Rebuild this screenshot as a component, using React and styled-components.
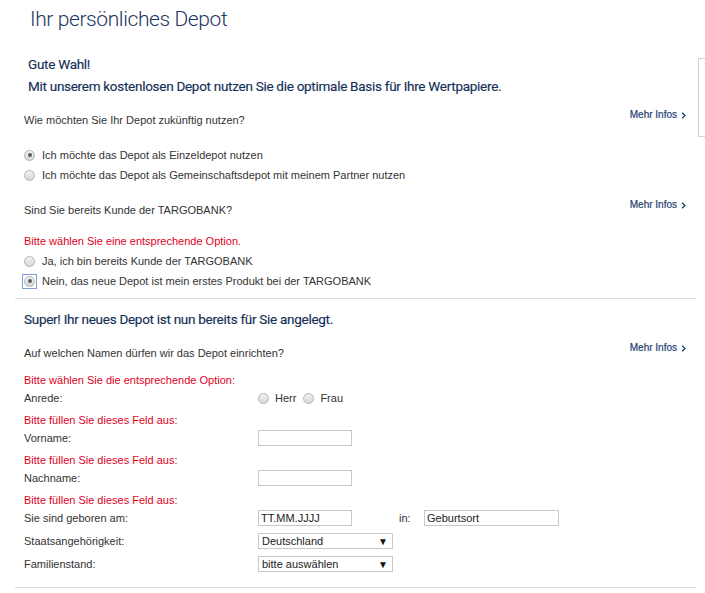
import React from 'react'
import styled, { createGlobalStyle, css } from 'styled-components'

const GlobalStyle = createGlobalStyle`
  body {
    margin: 0;
    background: #fff;
    overflow: hidden;
    font-family: "Liberation Sans", Arial, sans-serif;
    font-size: 11px;
    color: #333;
  }
`

const Page = styled.div`
  display: flex;
  align-items: flex-start;
  width: 705px;
  overflow: hidden;
`

const Main = styled.div`
  width: 698px;
  flex-shrink: 0;
`

const SideBox = styled.div`
  width: 60px;
  height: 79px;
  margin-top: 58px;
  flex-shrink: 0;
  border: 1px solid #d4d4d4;
  box-sizing: border-box;
`

const Title = styled.h1`
  margin: 6px 0 0 30px;
  font-family: Roboto, "Liberation Sans", sans-serif;
  font-weight: 300;
  font-size: 21px;
  line-height: 26px;
  letter-spacing: -0.4px;
  color: #1c355e;
`

const Content = styled.div`
  margin-left: 15px;
  width: 672px;
  padding: 0 1px 0 9px;
  box-sizing: border-box;
`

const Heading = styled.div`
  font-family: Roboto, "Liberation Sans", sans-serif;
  font-weight: 400;
  font-size: 13.5px;
  letter-spacing: -0.28px;
  line-height: 22px;
  color: #142f58;
  -webkit-text-stroke: 0.15px #142f58;
  margin-top: ${p => p.$mt || 0}px;
  padding-left: ${p => p.$indent || 0}px;
`

const QuestionRow = styled.div`
  display: flex;
  justify-content: space-between;
  align-items: flex-start;
  margin-top: ${p => p.$mt || 0}px;
`

const Question = styled.div`
  line-height: 20px;
  padding-top: 5px;
`

const MoreLink = styled.a`
  display: flex;
  align-items: center;
  gap: 4px;
  line-height: 20px;
  font-size: 10px;
  color: #21406f;
  text-decoration: none;
  -webkit-text-stroke: 0.2px #21406f;
  cursor: pointer;
`

const OptionGroup = styled.div`
  margin-top: ${p => p.$mt || 0}px;
`

const OptionRow = styled.label`
  display: flex;
  align-items: center;
  gap: 7px;
  height: 20px;
`

const Focus = styled.span`
  display: inline-flex;
  flex-shrink: 0;
  ${p => p.$on && css`
    margin: -2px;
    padding: 1px;
    border: 1px solid #7f9fd3;
  `}
`

const Radio = styled.span`
  position: relative;
  display: inline-block;
  width: 11px;
  height: 11px;
  box-sizing: border-box;
  border-radius: 50%;
  border: 1px solid #b3b3b3;
  background: linear-gradient(#f3f3f3, #d6d6d6);
  flex-shrink: 0;
  ${p => p.$checked && css`
    &::after {
      content: '';
      position: absolute;
      left: 2.5px;
      top: 2.5px;
      width: 4px;
      height: 4px;
      border-radius: 50%;
      background: #5a5a5a;
    }
  `}
`

const ErrorText = styled.div`
  color: #e0001b;
  line-height: ${p => p.$lh || 18}px;
  margin-top: ${p => p.$mt ?? 4}px;
`

const Divider = styled.hr`
  border: none;
  border-top: 1px solid #dcdcdc;
  margin: ${p => p.$mt || 0}px -10px 0 -9px;
  height: 0;
`

const FieldRow = styled.div`
  display: flex;
  align-items: center;
  height: 18px;
  margin-top: ${p => p.$mt || 0}px;
`

const FieldLabel = styled.div`
  width: 234px;
  flex-shrink: 0;
`

const Inline = styled.div`
  display: flex;
  align-items: center;
`

const Gender = styled.label`
  display: flex;
  align-items: center;
  gap: 6px;
  margin-right: 7px;
`

const TextInput = styled.input`
  width: ${p => p.$w || 94}px;
  height: 16px;
  box-sizing: border-box;
  border: 1px solid #c8c8c8;
  padding: 0 2px;
  font-family: "Liberation Sans", Arial, sans-serif;
  font-size: 11px;
  color: #222;
  outline: none;
  &::placeholder { color: #222; }
`

const InLabel = styled.span`
  width: 72px;
  padding-left: 47px;
  box-sizing: border-box;
`

const Select = styled.div`
  display: flex;
  align-items: center;
  justify-content: space-between;
  width: 135px;
  height: 16px;
  box-sizing: border-box;
  border: 1px solid #c8c8c8;
  padding: 0 4px 0 3px;
  color: #222;
  font-size: 11px;
`

const Arrow = styled.span`
  font-size: 10px;
  color: #111;
`

function Chevron() {
  return (
    <svg width="5" height="7" viewBox="0 0 5 7">
      <path d="M1 0.8 L4 3.5 L1 6.2" fill="none" stroke="#21406f" strokeWidth="1.4" />
    </svg>
  )
}

function More() {
  return <MoreLink>Mehr Infos <Chevron /></MoreLink>
}

function RadioOption({ checked, focused, children }) {
  return (
    <OptionRow>
      <Focus $on={focused}><Radio $checked={checked} /></Focus>
      {children}
    </OptionRow>
  )
}

export default function App() {
  return (
    <>
      <GlobalStyle />
      <Page>
        <Main>
          <Title>Ihr persönliches Depot</Title>
          <Content>
            <Heading $mt={21} $indent={4}>Gute Wahl!</Heading>
            <Heading $indent={4}>Mit unserem kostenlosen Depot nutzen Sie die optimale Basis für Ihre Wertpapiere.</Heading>

            <QuestionRow $mt={8}>
              <Question>Wie möchten Sie Ihr Depot zukünftig nutzen?</Question>
              <More />
            </QuestionRow>
            <OptionGroup $mt={15}>
              <RadioOption checked>Ich möchte das Depot als Einzeldepot nutzen</RadioOption>
              <RadioOption>Ich möchte das Depot als Gemeinschaftsdepot mit meinem Partner nutzen</RadioOption>
            </OptionGroup>

            <QuestionRow $mt={10}>
              <Question>Sind Sie bereits Kunde der TARGOBANK?</Question>
              <More />
            </QuestionRow>
            <ErrorText $mt={11} $lh={20}>Bitte wählen Sie eine entsprechende Option.</ErrorText>
            <OptionGroup>
              <RadioOption>Ja, ich bin bereits Kunde der TARGOBANK</RadioOption>
              <RadioOption checked focused>Nein, das neue Depot ist mein erstes Produkt bei der TARGOBANK</RadioOption>
            </OptionGroup>

            <Divider $mt={7} />

            <Heading $mt={9}>Super! Ihr neues Depot ist nun bereits für Sie angelegt.</Heading>
            <QuestionRow $mt={8}>
              <Question>Auf welchen Namen dürfen wir das Depot einrichten?</Question>
              <More />
            </QuestionRow>

            <ErrorText $mt={8}>Bitte wählen Sie die entsprechende Option:</ErrorText>
            <FieldRow>
              <FieldLabel>Anrede:</FieldLabel>
              <Inline>
                <Gender><Radio />Herr</Gender>
                <Gender><Radio />Frau</Gender>
              </Inline>
            </FieldRow>

            <ErrorText>Bitte füllen Sie dieses Feld aus:</ErrorText>
            <FieldRow>
              <FieldLabel>Vorname:</FieldLabel>
              <TextInput />
            </FieldRow>

            <ErrorText>Bitte füllen Sie dieses Feld aus:</ErrorText>
            <FieldRow>
              <FieldLabel>Nachname:</FieldLabel>
              <TextInput />
            </FieldRow>

            <ErrorText>Bitte füllen Sie dieses Feld aus:</ErrorText>
            <FieldRow>
              <FieldLabel>Sie sind geboren am:</FieldLabel>
              <TextInput placeholder="TT.MM.JJJJ" />
              <InLabel>in:</InLabel>
              <TextInput $w={135} placeholder="Geburtsort" />
            </FieldRow>

            <FieldRow $mt={5}>
              <FieldLabel>Staatsangehörigkeit:</FieldLabel>
              <Select>Deutschland<Arrow>▼</Arrow></Select>
            </FieldRow>
            <FieldRow $mt={5}>
              <FieldLabel>Familienstand:</FieldLabel>
              <Select>bitte auswählen<Arrow>▼</Arrow></Select>
            </FieldRow>

            <Divider $mt={14} />
          </Content>
        </Main>
        <SideBox />
      </Page>
    </>
  )
}
